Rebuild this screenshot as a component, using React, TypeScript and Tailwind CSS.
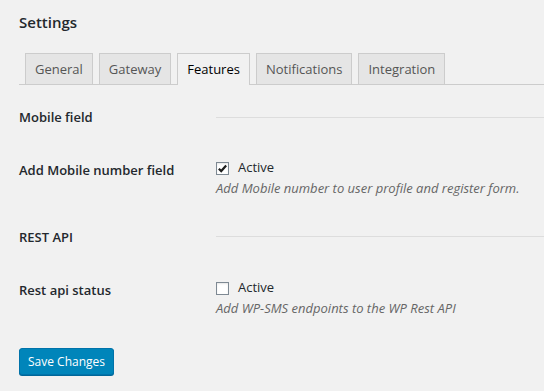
import { useState } from "react";

const tabs = ["General", "Gateway", "Features", "Notifications", "Integration"];

function Check({ on, onToggle }: { on: boolean; onToggle: () => void }) {
  return (
    <button
      type="button"
      onClick={onToggle}
      className="w-[13px] h-[13px] border border-[#7e8993] bg-white flex items-center justify-center shrink-0 shadow-[inset_0_1px_2px_rgba(0,0,0,0.1)]"
    >
      {on && (
        <svg viewBox="0 0 12 12" className="w-[11px] h-[11px]">
          <path d="M2 6.2 L4.6 8.8 L10 2.8" fill="none" stroke="#1e1e1e" strokeWidth="2.4" />
        </svg>
      )}
    </button>
  );
}

export default function App() {
  const [active, setActive] = useState("Features");
  const [mobile, setMobile] = useState(true);
  const [rest, setRest]     = useState(false);

  return (
    <div
      className="min-h-screen bg-[#f1f1f1] text-[#23282d] pl-[19px] pt-[11px] text-[13px]"
      style={{ fontFamily: '"Open Sans", "Noto Sans", sans-serif' }}
    >
      <h2 className="text-[15px] font-semibold leading-[22px]">Settings</h2>

      {/* Tabs */}
      <div className="mt-[20px] flex border-b border-[#ccc] pl-[6px] h-[32px]">
        {tabs.map(t => (
          <button
            key={t}
            onClick={() => setActive(t)}
            className={
              "mr-[6px] px-[9px] border border-[#ccc] border-b-0 h-[31px] text-[13px] leading-[29px] " +
              (t === active
                ? "bg-[#f1f1f1] text-black h-[32px] -mb-px"
                : "bg-[#e5e5e5] text-[#555]")
            }
          >
            {t}
          </button>
        ))}
      </div>

      {/* Mobile field */}
      <div className="grid grid-cols-[197px_1fr] mt-[23px] items-center h-[20px]">
        <div className="font-semibold">Mobile field</div>
        <div className="border-t border-[#ddd] -mt-[2px]" />
      </div>

      <div className="grid grid-cols-[197px_1fr] mt-[31px]">
        <div className="font-semibold pt-[1px] leading-[20px]">Add Mobile number field</div>
        <div>
          <div className="flex items-center gap-[9px] h-[14px] mt-[2px]">
            <Check on={mobile} onToggle={() => setMobile(!mobile)} />
            <span>Active</span>
          </div>
          <p className="italic text-[#666] mt-[3px] leading-[20px]">
            Add Mobile number to user profile and register form.
          </p>
        </div>
      </div>

      {/* REST API */}
      <div className="grid grid-cols-[197px_1fr] mt-[30px] items-center h-[20px]">
        <div className="font-semibold">REST API</div>
        <div className="border-t border-[#ddd] -mt-[4px]" />
      </div>

      <div className="grid grid-cols-[197px_1fr] mt-[31px]">
        <div className="font-semibold pt-[1px] leading-[20px]">Rest api status</div>
        <div>
          <div className="flex items-center gap-[9px] h-[14px] mt-[2px]">
            <Check on={rest} onToggle={() => setRest(!rest)} />
            <span>Active</span>
          </div>
          <p className="italic text-[#666] mt-[3px] leading-[20px]">
            Add WP-SMS endpoints to the WP Rest API
          </p>
        </div>
      </div>

      <button className="mt-[30px] h-[27px] px-[8px] rounded-[3px] bg-[#0085ba] border border-[#0073aa] text-white text-[12px] shadow-[0_1px_0_#006799]">
        Save Changes
      </button>
    </div>
  );
}
